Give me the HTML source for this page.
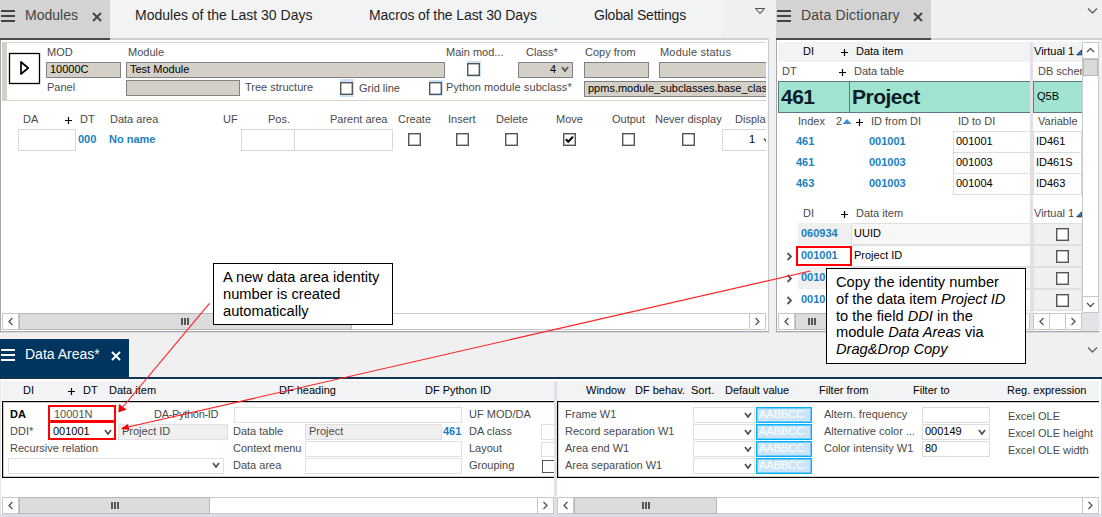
<!DOCTYPE html>
<html><head><meta charset="utf-8"><style>
html,body{margin:0;padding:0;width:1102px;height:517px;overflow:hidden;background:#f0f0f0}
.a{position:absolute}
.t{font-family:"Liberation Sans",sans-serif;white-space:nowrap}
</style></head><body>
<div class="a" style="left:0px;top:0px;width:1102px;height:517px;background:#f0f0f0;"></div>
<div class="a" style="left:0px;top:0px;width:722px;height:38px;background:#f2f3f5;"></div>
<div class="a" style="left:722px;top:0px;width:54px;height:38px;background:#f0f0f0;"></div>
<div class="a" style="left:0px;top:0px;width:110px;height:38px;background:#d3d3d3;"></div>
<div class="a" style="left:1px;top:10px;width:14px;height:2px;background:#444;"></div>
<div class="a" style="left:1px;top:15px;width:14px;height:2px;background:#444;"></div>
<div class="a" style="left:1px;top:20px;width:14px;height:2px;background:#444;"></div>
<div class="a t" style="left:25px;top:7px;font-size:14px;line-height:17px;color:#444;">Modules</div>
<svg class="a" style="left:92px;top:11.5px;" width="10" height="10" viewBox="0 0 10 10"><path d="M1 1L9 9M9 1L1 9" stroke="#444" stroke-width="1.9" fill="none"/></svg>
<div class="a t" style="left:135px;top:7px;font-size:14px;line-height:17px;color:#1e1e1e;">Modules of the Last 30 Days</div>
<div class="a t" style="left:369px;top:7px;font-size:14px;line-height:17px;color:#1e1e1e;letter-spacing:-0.1px;">Macros of the Last 30 Days</div>
<div class="a t" style="left:594px;top:7px;font-size:14px;line-height:17px;color:#1e1e1e;letter-spacing:-0.2px;">Global Settings</div>
<svg class="a" style="left:754px;top:7px;" width="12" height="8" viewBox="0 0 12 8"><path d="M1.5 1.5L10.5 1.5L6 6.5Z" stroke="#555" stroke-width="1.1" fill="none" stroke-linejoin="round"/></svg>
<div class="a" style="left:0px;top:38px;width:110px;height:2px;background:#4a4a4a;"></div>
<div class="a" style="left:110px;top:38px;width:659px;height:2px;background:#d0d0d0;"></div>
<div class="a" style="left:0px;top:40px;width:769px;height:293px;background:#fff;"></div>
<div class="a" style="left:0px;top:40px;width:1px;height:292px;background:#a8a8a8;"></div>
<div class="a" style="left:768px;top:40px;width:1px;height:292px;background:#c8ccd6;"></div>
<div class="a" style="left:0px;top:331px;width:769px;height:1px;background:#ababab;"></div>
<div class="a" style="left:0px;top:332px;width:769px;height:1px;background:#d8d8e2;"></div>
<div class="a" style="left:2px;top:42px;width:764px;height:1px;background:#d8d4cc;"></div>
<div class="a" style="left:2px;top:100px;width:764px;height:1px;background:#d8d4cc;"></div>
<div class="a" style="left:2px;top:42px;width:5px;height:59px;background:#d4d0c8;"></div>
<svg class="a" style="left:8px;top:52px;" width="34" height="34" viewBox="0 0 34 34"><rect x="1.5" y="1.5" width="30" height="30" stroke="#000" stroke-width="1.3" fill="#fff"/><path d="M13 10L13 22L20.2 16Z" stroke="#000" stroke-width="1.7" fill="none" stroke-linejoin="round"/></svg>
<div class="a t" style="left:47px;top:46px;font-size:11px;line-height:13px;color:#4a4a4a;">MOD</div>
<div class="a t" style="left:128px;top:46px;font-size:11px;line-height:13px;color:#4a4a4a;">Module</div>
<div class="a t" style="left:47px;top:81px;font-size:11px;line-height:13px;color:#4a4a4a;">Panel</div>
<div class="a" style="left:46px;top:62px;width:75px;height:16px;background:#d4d0c8;box-sizing:border-box;border:1px solid #828282;"></div>
<div class="a t" style="left:50px;top:63px;font-size:11px;line-height:13px;color:#000;">10000C</div>
<div class="a" style="left:126px;top:62px;width:319px;height:16px;background:#d4d0c8;box-sizing:border-box;border:1px solid #828282;"></div>
<div class="a t" style="left:130px;top:63px;font-size:11px;line-height:13px;color:#000;">Test Module</div>
<div class="a" style="left:126px;top:80px;width:114px;height:16px;background:#d4d0c8;box-sizing:border-box;border:1px solid #828282;"></div>
<div class="a t" style="left:245px;top:81px;font-size:11px;line-height:13px;color:#4a4a4a;">Tree structure</div>
<div class="a" style="left:340px;top:79px;width:14px;height:18px;background:#cce4fa;"></div>
<svg class="a" style="left:340px;top:82px;" width="13" height="13" viewBox="0 0 13 13"><rect x="0.7" y="0.7" width="11.6" height="11.6" stroke="#555" stroke-width="1.4" fill="#fff"/></svg>
<div class="a t" style="left:359px;top:82px;font-size:11px;line-height:13px;color:#4a4a4a;">Grid line</div>
<div class="a" style="left:429px;top:80px;width:14px;height:16px;background:#cce4fa;"></div>
<svg class="a" style="left:429px;top:82px;" width="13" height="13" viewBox="0 0 13 13"><rect x="0.7" y="0.7" width="11.6" height="11.6" stroke="#555" stroke-width="1.4" fill="#fff"/></svg>
<div class="a t" style="left:446px;top:81px;font-size:11px;line-height:13px;color:#4a4a4a;letter-spacing:0.1px;">Python module subclass*</div>
<div class="a t" style="left:446px;top:46px;font-size:11px;line-height:13px;color:#4a4a4a;">Main mod...</div>
<div class="a" style="left:467px;top:61px;width:14px;height:16px;background:#cce4fa;"></div>
<svg class="a" style="left:467px;top:63px;" width="13" height="13" viewBox="0 0 13 13"><rect x="0.7" y="0.7" width="11.6" height="11.6" stroke="#555" stroke-width="1.4" fill="#fff"/></svg>
<div class="a t" style="left:526px;top:46px;font-size:11px;line-height:13px;color:#4a4a4a;">Class*</div>
<div class="a" style="left:518px;top:62px;width:55px;height:16px;background:#d4d0c8;box-sizing:border-box;border:1px solid #828282;"></div>
<div class="a t" style="left:550px;top:63px;font-size:11px;line-height:13px;color:#000;">4</div>
<svg class="a" style="left:561px;top:66px;" width="8" height="6" viewBox="0 0 8 6"><path d="M1 1L4.0 5L7 1" stroke="#555" stroke-width="1.8" fill="none"/></svg>
<div class="a t" style="left:585px;top:46px;font-size:11px;line-height:13px;color:#4a4a4a;">Copy from</div>
<div class="a" style="left:584px;top:62px;width:65px;height:16px;background:#d4d0c8;box-sizing:border-box;border:1px solid #828282;"></div>
<div class="a t" style="left:660px;top:46px;font-size:11px;line-height:13px;color:#4a4a4a;letter-spacing:0.2px;">Module status</div>
<div class="a" style="left:659px;top:62px;width:107px;height:16px;background:#d4d0c8;box-sizing:border-box;border:1px solid #828282;border-right:none;"></div>
<div class="a" style="left:584px;top:81px;width:182px;height:16px;overflow:hidden">
<div class="a" style="left:0px;top:0px;width:200px;height:16px;background:#d4d0c8;box-sizing:border-box;border:1px solid #828282;"></div>
<div class="a t" style="left:4px;top:1px;font-size:11px;line-height:13px;color:#000;">ppms.module_subclasses.base_class</div>
</div>
<div class="a t" style="left:23px;top:113px;font-size:11px;line-height:13px;color:#4a4a4a;">DA</div>
<svg class="a" style="left:65px;top:117px;" width="7" height="7" viewBox="0 0 7 7"><path d="M3.5 0V7M0 3.5H7" stroke="#000" stroke-width="1.2"/></svg>
<div class="a t" style="left:80px;top:113px;font-size:11px;line-height:13px;color:#4a4a4a;">DT</div>
<div class="a t" style="left:110px;top:113px;font-size:11px;line-height:13px;color:#4a4a4a;">Data area</div>
<div class="a t" style="left:223px;top:113px;font-size:11px;line-height:13px;color:#4a4a4a;">UF</div>
<div class="a t" style="left:268px;top:113px;font-size:11px;line-height:13px;color:#4a4a4a;">Pos.</div>
<div class="a t" style="left:330px;top:113px;font-size:11px;line-height:13px;color:#4a4a4a;">Parent area</div>
<div class="a t" style="left:398px;top:113px;font-size:11px;line-height:13px;color:#4a4a4a;">Create</div>
<div class="a t" style="left:448px;top:113px;font-size:11px;line-height:13px;color:#4a4a4a;">Insert</div>
<div class="a t" style="left:496px;top:113px;font-size:11px;line-height:13px;color:#4a4a4a;">Delete</div>
<div class="a t" style="left:556px;top:113px;font-size:11px;line-height:13px;color:#4a4a4a;">Move</div>
<div class="a t" style="left:612px;top:113px;font-size:11px;line-height:13px;color:#4a4a4a;">Output</div>
<div class="a t" style="left:655px;top:113px;font-size:11px;line-height:13px;color:#4a4a4a;">Never display</div>
<div class="a" style="left:0;top:110px;width:766px;height:50px;overflow:hidden">
<div class="a t" style="left:735px;top:3px;font-size:11px;line-height:13px;color:#4a4a4a;">Displa</div>
<div class="a" style="left:722px;top:19px;width:60px;height:22px;background:#fff;box-sizing:border-box;border:1px solid #d8d8d8;"></div>
<div class="a t" style="left:749px;top:23px;font-size:11px;line-height:13px;color:#000;">1</div>
<svg class="a" style="left:763px;top:27px;" width="6" height="6" viewBox="0 0 6 6"><path d="M1 1.5L3 4L5 1.5" stroke="#555" stroke-width="1.5" fill="none"/></svg>
</div>
<div class="a" style="left:18px;top:129px;width:58px;height:22px;background:#fff;box-sizing:border-box;border:1px solid #d8d8d8;"></div>
<div class="a t" style="left:78px;top:133px;font-size:11px;line-height:13px;color:#1b7fc1;font-weight:700;">000</div>
<div class="a t" style="left:109px;top:133px;font-size:11px;line-height:13px;color:#1b7fc1;font-weight:700;">No name</div>
<div class="a" style="left:241px;top:129px;width:54px;height:22px;background:#fff;box-sizing:border-box;border:1px solid #d8d8d8;"></div>
<div class="a" style="left:294px;top:129px;width:99px;height:22px;background:#fff;box-sizing:border-box;border:1px solid #d8d8d8;"></div>
<svg class="a" style="left:408px;top:133px;" width="13" height="13" viewBox="0 0 13 13"><rect x="0.7" y="0.7" width="11.6" height="11.6" stroke="#555" stroke-width="1.4" fill="#fff"/></svg>
<svg class="a" style="left:456px;top:133px;" width="13" height="13" viewBox="0 0 13 13"><rect x="0.7" y="0.7" width="11.6" height="11.6" stroke="#555" stroke-width="1.4" fill="#fff"/></svg>
<svg class="a" style="left:505px;top:133px;" width="13" height="13" viewBox="0 0 13 13"><rect x="0.7" y="0.7" width="11.6" height="11.6" stroke="#555" stroke-width="1.4" fill="#fff"/></svg>
<svg class="a" style="left:563px;top:133px;" width="13" height="13" viewBox="0 0 13 13"><rect x="0.7" y="0.7" width="11.6" height="11.6" stroke="#555" stroke-width="1.4" fill="#fff"/><path d="M2.8 6.2L5.3 8.8L10 3.6" stroke="#000" stroke-width="2.1" fill="none"/></svg>
<svg class="a" style="left:622px;top:133px;" width="13" height="13" viewBox="0 0 13 13"><rect x="0.7" y="0.7" width="11.6" height="11.6" stroke="#555" stroke-width="1.4" fill="#fff"/></svg>
<svg class="a" style="left:682px;top:133px;" width="13" height="13" viewBox="0 0 13 13"><rect x="0.7" y="0.7" width="11.6" height="11.6" stroke="#555" stroke-width="1.4" fill="#fff"/></svg>
<div class="a" style="left:2px;top:313px;width:764px;height:17px;background:#fff;box-sizing:border-box;border:1px solid #c8c8c8;"></div>
<div class="a" style="left:2px;top:313px;width:17px;height:17px;background:#fff;box-sizing:border-box;border:1px solid #c8c8c8;"></div>
<svg class="a" style="left:2px;top:313px;" width="17" height="17" viewBox="0 0 17 17"><path d="M10.5 5L7 8.5L10.5 12" stroke="#555" stroke-width="1.3" fill="none"/></svg>
<div class="a" style="left:19px;top:313px;width:333px;height:17px;background:#dcdcdc;box-sizing:border-box;border:1px solid #b8b8b8;"></div>
<div class="a" style="left:181px;top:318px;width:2px;height:7px;background:#555;"></div>
<div class="a" style="left:184px;top:318px;width:2px;height:7px;background:#555;"></div>
<div class="a" style="left:187px;top:318px;width:2px;height:7px;background:#555;"></div>
<div class="a" style="left:749px;top:313px;width:17px;height:17px;background:#fff;box-sizing:border-box;border:1px solid #c8c8c8;"></div>
<svg class="a" style="left:749px;top:313px;" width="17" height="17" viewBox="0 0 17 17"><path d="M6.5 5L10 8.5L6.5 12" stroke="#555" stroke-width="1.3" fill="none"/></svg>
<div class="a" style="left:776px;top:0px;width:326px;height:38px;background:#f0f0f0;"></div>
<div class="a" style="left:776px;top:0px;width:155px;height:38px;background:#d3d3d3;"></div>
<div class="a" style="left:777px;top:10px;width:14px;height:2px;background:#444;"></div>
<div class="a" style="left:777px;top:15px;width:14px;height:2px;background:#444;"></div>
<div class="a" style="left:777px;top:20px;width:14px;height:2px;background:#444;"></div>
<div class="a t" style="left:801px;top:7px;font-size:14px;line-height:17px;color:#444;letter-spacing:0.2px;">Data Dictionary</div>
<svg class="a" style="left:913px;top:11.5px;" width="10" height="10" viewBox="0 0 10 10"><path d="M1 1L9 9M9 1L1 9" stroke="#444" stroke-width="1.9" fill="none"/></svg>
<svg class="a" style="left:1087px;top:7px;" width="12" height="8" viewBox="0 0 12 8"><path d="M1 1.5L5.5 6L10 1.5" stroke="#666" stroke-width="1.5" fill="none"/></svg>
<div class="a" style="left:776px;top:38px;width:155px;height:2px;background:#4a4a4a;"></div>
<div class="a" style="left:931px;top:38px;width:171px;height:2px;background:#d0d0d0;"></div>
<div class="a" style="left:776px;top:40px;width:323px;height:293px;background:#fff;"></div>
<div class="a" style="left:776px;top:40px;width:1px;height:292px;background:#a8a8a8;"></div>
<div class="a" style="left:776px;top:331px;width:323px;height:1px;background:#ababab;"></div>
<div class="a" style="left:776px;top:332px;width:323px;height:1px;background:#d8d8e2;"></div>
<div class="a" style="left:778px;top:42px;width:304px;height:20px;background:#f2f3f5;"></div>
<div class="a t" style="left:803px;top:45px;font-size:11px;line-height:13px;color:#000;">DI</div>
<svg class="a" style="left:841px;top:49px;" width="7" height="7" viewBox="0 0 7 7"><path d="M3.5 0V7M0 3.5H7" stroke="#000" stroke-width="1.2"/></svg>
<div class="a t" style="left:856px;top:45px;font-size:11px;line-height:13px;color:#000;">Data item</div>
<div class="a t" style="left:1034px;top:45px;font-size:11px;line-height:13px;color:#000;">Virtual 1</div>
<svg class="a" style="left:1076px;top:49px;" width="7" height="7" viewBox="0 0 7 7"><path d="M0.8 5.8L5.8 0.8L5.8 5.8Z" fill="#2a8ae0" stroke="#223" stroke-width="0.9" stroke-linejoin="round"/></svg>
<div class="a t" style="left:782px;top:65px;font-size:11px;line-height:13px;color:#4a4a4a;">DT</div>
<svg class="a" style="left:839px;top:69px;" width="7" height="7" viewBox="0 0 7 7"><path d="M3.5 0V7M0 3.5H7" stroke="#000" stroke-width="1.2"/></svg>
<div class="a t" style="left:854px;top:65px;font-size:11px;line-height:13px;color:#4a4a4a;">Data table</div>
<div class="a" style="left:1033px;top:60px;width:49px;height:20px;overflow:hidden">
<div class="a t" style="left:5px;top:5px;font-size:11px;line-height:13px;color:#4a4a4a;">DB schema</div>
</div>
<div class="a" style="left:778px;top:81px;width:253px;height:32px;background:#9fe3d0;box-sizing:border-box;border:1px solid #5f7888;"></div>
<div class="a" style="left:849px;top:81px;width:1px;height:32px;background:#5f7888;"></div>
<div class="a t" style="left:781px;top:84px;font-size:21px;line-height:25px;color:#0d1b2a;font-weight:700;letter-spacing:-0.5px;">461</div>
<div class="a t" style="left:852px;top:84px;font-size:21px;line-height:25px;color:#0d1b2a;font-weight:700;letter-spacing:-0.5px;">Project</div>
<div class="a" style="left:1033px;top:81px;width:50px;height:32px;background:#9fe3d0;box-sizing:border-box;border:1px solid #5f7888;"></div>
<div class="a t" style="left:1037px;top:90px;font-size:11px;line-height:13px;color:#000;">Q5B</div>
<div class="a" style="left:1030px;top:42px;width:3px;height:289px;background:#e4dfe8;"></div>
<div class="a t" style="left:798px;top:115px;font-size:11px;line-height:13px;color:#4a4a4a;">Index</div>
<div class="a t" style="left:836px;top:115px;font-size:11px;line-height:13px;color:#4a4a4a;">2</div>
<svg class="a" style="left:842px;top:118px;" width="10" height="7" viewBox="0 0 10 7"><path d="M0.5 6L5 1L9.5 6Z" fill="#3a8fd8"/></svg>
<svg class="a" style="left:856px;top:119px;" width="7" height="7" viewBox="0 0 7 7"><path d="M3.5 0V7M0 3.5H7" stroke="#000" stroke-width="1.2"/></svg>
<div class="a t" style="left:871px;top:115px;font-size:11px;line-height:13px;color:#4a4a4a;">ID from DI</div>
<div class="a t" style="left:958px;top:115px;font-size:11px;line-height:13px;color:#4a4a4a;">ID to DI</div>
<div class="a t" style="left:1038px;top:115px;font-size:11px;line-height:13px;color:#4a4a4a;">Variable</div>
<div class="a" style="left:953px;top:131px;width:78px;height:22px;background:#fff;box-sizing:border-box;border:1px solid #dcdcdc;"></div>
<div class="a" style="left:1033px;top:131px;width:49px;height:22px;background:#fff;box-sizing:border-box;border:1px solid #dcdcdc;"></div>
<div class="a t" style="left:796px;top:135px;font-size:11px;line-height:13px;color:#1b7fc1;font-weight:700;">461</div>
<div class="a t" style="left:869px;top:135px;font-size:11px;line-height:13px;color:#1b7fc1;font-weight:700;">001001</div>
<div class="a t" style="left:956px;top:135px;font-size:11px;line-height:13px;color:#000;">001001</div>
<div class="a t" style="left:1036px;top:135px;font-size:11px;line-height:13px;color:#000;">ID461</div>
<div class="a" style="left:953px;top:152px;width:78px;height:22px;background:#fff;box-sizing:border-box;border:1px solid #dcdcdc;"></div>
<div class="a" style="left:1033px;top:152px;width:49px;height:22px;background:#fff;box-sizing:border-box;border:1px solid #dcdcdc;"></div>
<div class="a t" style="left:796px;top:156px;font-size:11px;line-height:13px;color:#1b7fc1;font-weight:700;">461</div>
<div class="a t" style="left:869px;top:156px;font-size:11px;line-height:13px;color:#1b7fc1;font-weight:700;">001003</div>
<div class="a t" style="left:956px;top:156px;font-size:11px;line-height:13px;color:#000;">001003</div>
<div class="a t" style="left:1036px;top:156px;font-size:11px;line-height:13px;color:#000;">ID461S</div>
<div class="a" style="left:953px;top:173px;width:78px;height:22px;background:#fff;box-sizing:border-box;border:1px solid #dcdcdc;"></div>
<div class="a" style="left:1033px;top:173px;width:49px;height:22px;background:#fff;box-sizing:border-box;border:1px solid #dcdcdc;"></div>
<div class="a t" style="left:796px;top:177px;font-size:11px;line-height:13px;color:#1b7fc1;font-weight:700;">463</div>
<div class="a t" style="left:869px;top:177px;font-size:11px;line-height:13px;color:#1b7fc1;font-weight:700;">001003</div>
<div class="a t" style="left:956px;top:177px;font-size:11px;line-height:13px;color:#000;">001004</div>
<div class="a t" style="left:1036px;top:177px;font-size:11px;line-height:13px;color:#000;">ID463</div>
<div class="a t" style="left:803px;top:207px;font-size:11px;line-height:13px;color:#4a4a4a;">DI</div>
<svg class="a" style="left:841px;top:211px;" width="7" height="7" viewBox="0 0 7 7"><path d="M3.5 0V7M0 3.5H7" stroke="#000" stroke-width="1.2"/></svg>
<div class="a t" style="left:856px;top:207px;font-size:11px;line-height:13px;color:#4a4a4a;">Data item</div>
<div class="a t" style="left:1034px;top:207px;font-size:11px;line-height:13px;color:#4a4a4a;">Virtual 1</div>
<svg class="a" style="left:1076px;top:211px;" width="7" height="7" viewBox="0 0 7 7"><path d="M0.8 5.8L5.8 0.8L5.8 5.8Z" fill="#2a8ae0" stroke="#223" stroke-width="0.9" stroke-linejoin="round"/></svg>
<div class="a" style="left:798px;top:223px;width:54px;height:22px;background:#f0f0f0;"></div>
<div class="a" style="left:851px;top:223px;width:180px;height:22px;background:#f7f7f7;box-sizing:border-box;border:1px solid #e0e0e0;"></div>
<div class="a" style="left:1033px;top:223px;width:49px;height:22px;background:#f0f0f0;box-sizing:border-box;border:1px solid #e0e0e0;"></div>
<div class="a t" style="left:801px;top:227px;font-size:11px;line-height:13px;color:#1b7fc1;font-weight:700;">060934</div>
<div class="a t" style="left:854px;top:227px;font-size:11px;line-height:13px;color:#000;">UUID</div>
<svg class="a" style="left:1056px;top:228px;" width="13" height="13" viewBox="0 0 13 13"><rect x="0.7" y="0.7" width="11.6" height="11.6" stroke="#555" stroke-width="1.4" fill="#fff"/></svg>
<div class="a" style="left:798px;top:245px;width:54px;height:22px;background:#fff;"></div>
<div class="a" style="left:851px;top:245px;width:180px;height:22px;background:#fff;box-sizing:border-box;border:1px solid #e0e0e0;"></div>
<div class="a" style="left:1033px;top:245px;width:49px;height:22px;background:#f0f0f0;box-sizing:border-box;border:1px solid #e0e0e0;"></div>
<svg class="a" style="left:786px;top:252px;" width="7" height="9" viewBox="0 0 7 9"><path d="M1.5 1L5 4.5L1.5 8" stroke="#555" stroke-width="1.8" fill="none"/></svg>
<div class="a t" style="left:801px;top:249px;font-size:11px;line-height:13px;color:#1b7fc1;font-weight:700;">001001</div>
<div class="a t" style="left:854px;top:249px;font-size:11px;line-height:13px;color:#000;">Project ID</div>
<svg class="a" style="left:1056px;top:250px;" width="13" height="13" viewBox="0 0 13 13"><rect x="0.7" y="0.7" width="11.6" height="11.6" stroke="#555" stroke-width="1.4" fill="#fff"/></svg>
<div class="a" style="left:798px;top:267px;width:54px;height:22px;background:#f0f0f0;"></div>
<div class="a" style="left:851px;top:267px;width:180px;height:22px;background:#f7f7f7;box-sizing:border-box;border:1px solid #e0e0e0;"></div>
<div class="a" style="left:1033px;top:267px;width:49px;height:22px;background:#f0f0f0;box-sizing:border-box;border:1px solid #e0e0e0;"></div>
<svg class="a" style="left:786px;top:274px;" width="7" height="9" viewBox="0 0 7 9"><path d="M1.5 1L5 4.5L1.5 8" stroke="#555" stroke-width="1.8" fill="none"/></svg>
<div class="a t" style="left:801px;top:271px;font-size:11px;line-height:13px;color:#1b7fc1;font-weight:700;">001010</div>
<div class="a t" style="left:854px;top:271px;font-size:11px;line-height:13px;color:#000;">Project name</div>
<svg class="a" style="left:1056px;top:272px;" width="13" height="13" viewBox="0 0 13 13"><rect x="0.7" y="0.7" width="11.6" height="11.6" stroke="#555" stroke-width="1.4" fill="#fff"/></svg>
<div class="a" style="left:798px;top:289px;width:54px;height:22px;background:#fff;"></div>
<div class="a" style="left:851px;top:289px;width:180px;height:22px;background:#fff;box-sizing:border-box;border:1px solid #e0e0e0;"></div>
<div class="a" style="left:1033px;top:289px;width:49px;height:22px;background:#f0f0f0;box-sizing:border-box;border:1px solid #e0e0e0;"></div>
<svg class="a" style="left:786px;top:296px;" width="7" height="9" viewBox="0 0 7 9"><path d="M1.5 1L5 4.5L1.5 8" stroke="#555" stroke-width="1.8" fill="none"/></svg>
<div class="a t" style="left:801px;top:293px;font-size:11px;line-height:13px;color:#1b7fc1;font-weight:700;">001011</div>
<div class="a t" style="left:854px;top:293px;font-size:11px;line-height:13px;color:#000;">Project x</div>
<svg class="a" style="left:1056px;top:294px;" width="13" height="13" viewBox="0 0 13 13"><rect x="0.7" y="0.7" width="11.6" height="11.6" stroke="#555" stroke-width="1.4" fill="#fff"/></svg>
<div class="a" style="left:796px;top:246px;width:56px;height:20px;box-sizing:border-box;border:2px solid #f00;"></div>
<div class="a" style="left:1082px;top:42px;width:17px;height:271px;background:#fff;box-sizing:border-box;border:1px solid #c8c8c8;"></div>
<div class="a" style="left:1082px;top:42px;width:17px;height:17px;background:#fff;box-sizing:border-box;border:1px solid #c8c8c8;"></div>
<svg class="a" style="left:1082px;top:42px;" width="17" height="17" viewBox="0 0 17 17"><path d="M5 10L8.5 6.5L12 10" stroke="#555" stroke-width="1.3" fill="none"/></svg>
<div class="a" style="left:1083px;top:59px;width:15px;height:17px;background:#dadada;box-sizing:border-box;border:1px solid #b8b8b8;"></div>
<div class="a" style="left:1082px;top:296px;width:17px;height:17px;background:#fff;box-sizing:border-box;border:1px solid #c8c8c8;"></div>
<svg class="a" style="left:1082px;top:296px;" width="17" height="17" viewBox="0 0 17 17"><path d="M5 7L8.5 10.5L12 7" stroke="#555" stroke-width="1.3" fill="none"/></svg>
<div class="a" style="left:1082px;top:313px;width:17px;height:18px;background:#e6e2ea;"></div>
<div class="a" style="left:778px;top:313px;width:252px;height:17px;background:#fff;box-sizing:border-box;border:1px solid #c8c8c8;"></div>
<div class="a" style="left:778px;top:313px;width:17px;height:17px;background:#fff;box-sizing:border-box;border:1px solid #c8c8c8;"></div>
<svg class="a" style="left:778px;top:313px;" width="17" height="17" viewBox="0 0 17 17"><path d="M10.5 5L7 8.5L10.5 12" stroke="#555" stroke-width="1.3" fill="none"/></svg>
<div class="a" style="left:795px;top:313px;width:80px;height:17px;background:#dcdcdc;box-sizing:border-box;border:1px solid #b8b8b8;"></div>
<div class="a" style="left:808px;top:318px;width:2px;height:7px;background:#555;"></div>
<div class="a" style="left:811px;top:318px;width:2px;height:7px;background:#555;"></div>
<div class="a" style="left:814px;top:318px;width:2px;height:7px;background:#555;"></div>
<div class="a" style="left:1033px;top:313px;width:49px;height:17px;background:#fff;box-sizing:border-box;border:1px solid #c8c8c8;"></div>
<div class="a" style="left:1033px;top:313px;width:17px;height:17px;background:#fff;box-sizing:border-box;border:1px solid #c8c8c8;"></div>
<svg class="a" style="left:1033px;top:313px;" width="17" height="17" viewBox="0 0 17 17"><path d="M10.5 5L7 8.5L10.5 12" stroke="#555" stroke-width="1.3" fill="none"/></svg>
<div class="a" style="left:1049px;top:313px;width:17px;height:17px;background:#fff;box-sizing:border-box;border:1px solid #c8c8c8;"></div>
<div class="a" style="left:1065px;top:313px;width:17px;height:17px;background:#fff;box-sizing:border-box;border:1px solid #c8c8c8;"></div>
<svg class="a" style="left:1065px;top:313px;" width="17" height="17" viewBox="0 0 17 17"><path d="M6.5 5L10 8.5L6.5 12" stroke="#555" stroke-width="1.3" fill="none"/></svg>
<svg class="a" style="left:1087px;top:346px;" width="12" height="8" viewBox="0 0 12 8"><path d="M1 1.5L5.5 6L10 1.5" stroke="#666" stroke-width="1.5" fill="none"/></svg>
<div class="a" style="left:0px;top:339px;width:129px;height:39px;background:#003560;"></div>
<div class="a" style="left:1px;top:349px;width:14px;height:2px;background:#fff;"></div>
<div class="a" style="left:1px;top:354px;width:14px;height:2px;background:#fff;"></div>
<div class="a" style="left:1px;top:359px;width:14px;height:2px;background:#fff;"></div>
<div class="a t" style="left:25px;top:346px;font-size:14px;line-height:17px;color:#fff;">Data Areas*</div>
<svg class="a" style="left:111px;top:351px;" width="10" height="10" viewBox="0 0 10 10"><path d="M1 1L9 9M9 1L1 9" stroke="#fff" stroke-width="2" fill="none"/></svg>
<div class="a" style="left:0px;top:377px;width:1102px;height:2px;background:#0f3456;"></div>
<div class="a" style="left:0px;top:379px;width:1099px;height:135px;background:#fff;"></div>
<div class="a" style="left:2px;top:381px;width:1097px;height:19px;background:#f2f3f5;"></div>
<div class="a" style="left:0px;top:380px;width:1px;height:134px;background:#e6e6e6;"></div>
<div class="a" style="left:0px;top:514px;width:1102px;height:3px;background:#dcdce4;"></div>
<div class="a" style="left:1099px;top:379px;width:3px;height:135px;background:#fff;"></div>
<div class="a" style="left:1101px;top:379px;width:1px;height:135px;background:#d8d8d8;"></div>
<div class="a t" style="left:23px;top:384px;font-size:11px;line-height:13px;color:#000;">DI</div>
<svg class="a" style="left:68px;top:388px;" width="7" height="7" viewBox="0 0 7 7"><path d="M3.5 0V7M0 3.5H7" stroke="#000" stroke-width="1.2"/></svg>
<div class="a t" style="left:83px;top:384px;font-size:11px;line-height:13px;color:#000;">DT</div>
<div class="a t" style="left:109px;top:384px;font-size:11px;line-height:13px;color:#000;">Data item</div>
<div class="a t" style="left:279px;top:384px;font-size:11px;line-height:13px;color:#000;">DF heading</div>
<div class="a t" style="left:425px;top:384px;font-size:11px;line-height:13px;color:#000;">DF Python ID</div>
<div class="a t" style="left:586px;top:384px;font-size:11px;line-height:13px;color:#000;">Window</div>
<div class="a t" style="left:635px;top:384px;font-size:11px;line-height:13px;color:#000;">DF behav.</div>
<div class="a t" style="left:691px;top:384px;font-size:11px;line-height:13px;color:#000;">Sort.</div>
<div class="a t" style="left:725px;top:384px;font-size:11px;line-height:13px;color:#000;">Default value</div>
<div class="a t" style="left:819px;top:384px;font-size:11px;line-height:13px;color:#000;">Filter from</div>
<div class="a t" style="left:913px;top:384px;font-size:11px;line-height:13px;color:#000;">Filter to</div>
<div class="a t" style="left:1007px;top:384px;font-size:11px;line-height:13px;color:#000;">Reg. expression</div>
<div class="a" style="left:554px;top:381px;width:3px;height:133px;background:#e6dfe8;"></div>
<div class="a" style="left:2px;top:401px;width:552px;height:77px;box-sizing:border-box;border:1px solid #000;border-right:none;box-shadow:inset 1px 1px 0 rgba(0,0,0,.2),inset 0 -1px 0 rgba(0,0,0,.2);"></div>
<div class="a t" style="left:10px;top:408px;font-size:11px;line-height:13px;color:#000;font-weight:700;">DA</div>
<div class="a t" style="left:10px;top:425px;font-size:11px;line-height:13px;color:#4a4a4a;">DDI*</div>
<div class="a t" style="left:10px;top:442px;font-size:11px;line-height:13px;color:#4a4a4a;">Recursive relation</div>
<div class="a" style="left:48px;top:405px;width:68px;height:17px;background:#fff;box-sizing:border-box;border:2px solid #f00;"></div>
<div class="a t" style="left:54px;top:408px;font-size:11px;line-height:13px;color:#505050;">10001N</div>
<div class="a" style="left:48px;top:421px;width:68px;height:19px;background:#fff;box-sizing:border-box;border:2px solid #f00;"></div>
<div class="a t" style="left:53px;top:425px;font-size:11px;line-height:13px;color:#000;">001001</div>
<svg class="a" style="left:104px;top:429px;" width="8" height="6" viewBox="0 0 8 6"><path d="M1 1L4.0 5L7 1" stroke="#555" stroke-width="1.8" fill="none"/></svg>
<div class="a" style="left:118px;top:424px;width:110px;height:16px;background:#f0f0f0;box-sizing:border-box;border:1px solid #e0e0e0;"></div>
<div class="a t" style="left:122px;top:425px;font-size:11px;line-height:13px;color:#4a4a4a;">Project ID</div>
<div class="a" style="left:8px;top:458px;width:216px;height:16px;background:#fff;box-sizing:border-box;border:1px solid #e0e0e0;"></div>
<svg class="a" style="left:212px;top:462px;" width="8" height="6" viewBox="0 0 8 6"><path d="M1 1L4.0 5L7 1" stroke="#555" stroke-width="1.8" fill="none"/></svg>
<div class="a t" style="left:154px;top:408px;font-size:11px;line-height:13px;color:#4a4a4a;letter-spacing:-0.3px;">DA-Python-ID</div>
<div class="a" style="left:234px;top:407px;width:228px;height:16px;background:#fff;box-sizing:border-box;border:1px solid #e0e0e0;"></div>
<div class="a t" style="left:233px;top:425px;font-size:11px;line-height:13px;color:#4a4a4a;">Data table</div>
<div class="a t" style="left:233px;top:442px;font-size:11px;line-height:13px;color:#4a4a4a;">Context menu</div>
<div class="a t" style="left:233px;top:459px;font-size:11px;line-height:13px;color:#4a4a4a;">Data area</div>
<div class="a" style="left:305px;top:424px;width:137px;height:16px;background:#f0f0f0;box-sizing:border-box;border:1px solid #e0e0e0;"></div>
<div class="a t" style="left:309px;top:425px;font-size:11px;line-height:13px;color:#4a4a4a;">Project</div>
<div class="a t" style="left:443px;top:425px;font-size:11px;line-height:13px;color:#1b7fc1;font-weight:700;">461</div>
<div class="a" style="left:305px;top:441px;width:157px;height:16px;background:#fff;box-sizing:border-box;border:1px solid #e0e0e0;"></div>
<div class="a" style="left:305px;top:458px;width:157px;height:16px;background:#fff;box-sizing:border-box;border:1px solid #e0e0e0;"></div>
<div class="a t" style="left:469px;top:408px;font-size:11px;line-height:13px;color:#4a4a4a;">UF MOD/DA</div>
<div class="a t" style="left:469px;top:425px;font-size:11px;line-height:13px;color:#4a4a4a;">DA class</div>
<div class="a t" style="left:469px;top:442px;font-size:11px;line-height:13px;color:#4a4a4a;">Layout</div>
<div class="a t" style="left:469px;top:459px;font-size:11px;line-height:13px;color:#4a4a4a;">Grouping</div>
<div class="a" style="left:530px;top:400px;width:24px;height:78px;overflow:hidden">
<div class="a" style="left:11px;top:24px;width:30px;height:16px;background:#fff;box-sizing:border-box;border:1px solid #e0e0e0;"></div>
<div class="a" style="left:11px;top:42px;width:30px;height:15px;background:#fff;box-sizing:border-box;border:1px solid #e0e0e0;"></div>
<div class="a" style="left:12px;top:60px;width:14px;height:13px;background:#fff;box-sizing:border-box;border:1px solid #555;"></div>
</div>
<div class="a" style="left:557px;top:401px;width:542px;height:77px;box-sizing:border-box;border:1px solid #000;border-right:none;box-shadow:inset 1px 1px 0 rgba(0,0,0,.2),inset 0 -1px 0 rgba(0,0,0,.2);"></div>
<div class="a t" style="left:565px;top:408px;font-size:11px;line-height:13px;color:#4a4a4a;">Frame W1</div>
<div class="a t" style="left:565px;top:425px;font-size:11px;line-height:13px;color:#4a4a4a;">Record separation W1</div>
<div class="a t" style="left:565px;top:442px;font-size:11px;line-height:13px;color:#4a4a4a;">Area end W1</div>
<div class="a t" style="left:565px;top:459px;font-size:11px;line-height:13px;color:#4a4a4a;">Area separation W1</div>
<div class="a" style="left:693px;top:407px;width:62px;height:16px;background:#fff;box-sizing:border-box;border:1px solid #e0e0e0;"></div>
<svg class="a" style="left:744px;top:412px;" width="8" height="6" viewBox="0 0 8 6"><path d="M1 1L4.0 5L7 1" stroke="#555" stroke-width="1.8" fill="none"/></svg>
<div class="a" style="left:756px;top:407px;width:56px;height:16px;background:#cce4f7;box-sizing:border-box;border:1px solid #00b2fc;box-shadow:inset 0 0 0 1px rgba(0,178,252,.45);"></div>
<div class="a t" style="left:759px;top:408px;font-size:11px;line-height:13px;color:#fff;">AABBCC</div>
<div class="a" style="left:693px;top:424px;width:62px;height:16px;background:#fff;box-sizing:border-box;border:1px solid #e0e0e0;"></div>
<svg class="a" style="left:744px;top:429px;" width="8" height="6" viewBox="0 0 8 6"><path d="M1 1L4.0 5L7 1" stroke="#555" stroke-width="1.8" fill="none"/></svg>
<div class="a" style="left:756px;top:424px;width:56px;height:16px;background:#cce4f7;box-sizing:border-box;border:1px solid #00b2fc;box-shadow:inset 0 0 0 1px rgba(0,178,252,.45);"></div>
<div class="a t" style="left:759px;top:425px;font-size:11px;line-height:13px;color:#fff;">AABBCC</div>
<div class="a" style="left:693px;top:441px;width:62px;height:16px;background:#fff;box-sizing:border-box;border:1px solid #e0e0e0;"></div>
<svg class="a" style="left:744px;top:446px;" width="8" height="6" viewBox="0 0 8 6"><path d="M1 1L4.0 5L7 1" stroke="#555" stroke-width="1.8" fill="none"/></svg>
<div class="a" style="left:756px;top:441px;width:56px;height:16px;background:#cce4f7;box-sizing:border-box;border:1px solid #00b2fc;box-shadow:inset 0 0 0 1px rgba(0,178,252,.45);"></div>
<div class="a t" style="left:759px;top:442px;font-size:11px;line-height:13px;color:#fff;">AABBCC</div>
<div class="a" style="left:693px;top:458px;width:62px;height:16px;background:#fff;box-sizing:border-box;border:1px solid #e0e0e0;"></div>
<svg class="a" style="left:744px;top:463px;" width="8" height="6" viewBox="0 0 8 6"><path d="M1 1L4.0 5L7 1" stroke="#555" stroke-width="1.8" fill="none"/></svg>
<div class="a" style="left:756px;top:458px;width:56px;height:16px;background:#cce4f7;box-sizing:border-box;border:1px solid #00b2fc;box-shadow:inset 0 0 0 1px rgba(0,178,252,.45);"></div>
<div class="a t" style="left:759px;top:459px;font-size:11px;line-height:13px;color:#fff;">AABBCC</div>
<div class="a t" style="left:824px;top:408px;font-size:11px;line-height:13px;color:#4a4a4a;">Altern. frequency</div>
<div class="a t" style="left:824px;top:425px;font-size:11px;line-height:13px;color:#4a4a4a;">Alternative color ...</div>
<div class="a t" style="left:824px;top:442px;font-size:11px;line-height:13px;color:#4a4a4a;">Color intensity W1</div>
<div class="a" style="left:922px;top:407px;width:68px;height:16px;background:#fff;box-sizing:border-box;border:1px solid #dcdcdc;"></div>
<div class="a" style="left:922px;top:424px;width:68px;height:16px;background:#fff;box-sizing:border-box;border:1px solid #dcdcdc;"></div>
<div class="a t" style="left:925px;top:425px;font-size:11px;line-height:13px;color:#000;">000149</div>
<svg class="a" style="left:978px;top:429px;" width="8" height="6" viewBox="0 0 8 6"><path d="M1 1L4.0 5L7 1" stroke="#555" stroke-width="1.8" fill="none"/></svg>
<div class="a" style="left:922px;top:441px;width:68px;height:16px;background:#fff;box-sizing:border-box;border:1px solid #dcdcdc;"></div>
<div class="a t" style="left:925px;top:442px;font-size:11px;line-height:13px;color:#000;">80</div>
<div class="a t" style="left:1008px;top:410px;font-size:11px;line-height:13px;color:#4a4a4a;">Excel OLE</div>
<div class="a t" style="left:1008px;top:427px;font-size:11px;line-height:13px;color:#4a4a4a;">Excel OLE height</div>
<div class="a t" style="left:1008px;top:444px;font-size:11px;line-height:13px;color:#4a4a4a;">Excel OLE width</div>
<div class="a" style="left:2px;top:497px;width:552px;height:17px;background:#fff;box-sizing:border-box;border:1px solid #c8c8c8;"></div>
<div class="a" style="left:2px;top:497px;width:17px;height:17px;background:#fff;box-sizing:border-box;border:1px solid #c8c8c8;"></div>
<svg class="a" style="left:2px;top:497px;" width="17" height="17" viewBox="0 0 17 17"><path d="M10.5 5L7 8.5L10.5 12" stroke="#555" stroke-width="1.3" fill="none"/></svg>
<div class="a" style="left:19px;top:497px;width:191px;height:17px;background:#dcdcdc;box-sizing:border-box;border:1px solid #b8b8b8;"></div>
<div class="a" style="left:111px;top:502px;width:2px;height:7px;background:#555;"></div>
<div class="a" style="left:114px;top:502px;width:2px;height:7px;background:#555;"></div>
<div class="a" style="left:117px;top:502px;width:2px;height:7px;background:#555;"></div>
<div class="a" style="left:537px;top:497px;width:17px;height:17px;background:#fff;box-sizing:border-box;border:1px solid #c8c8c8;"></div>
<svg class="a" style="left:537px;top:497px;" width="17" height="17" viewBox="0 0 17 17"><path d="M6.5 5L10 8.5L6.5 12" stroke="#555" stroke-width="1.3" fill="none"/></svg>
<div class="a" style="left:557px;top:497px;width:542px;height:17px;background:#fff;box-sizing:border-box;border:1px solid #c8c8c8;"></div>
<div class="a" style="left:557px;top:497px;width:17px;height:17px;background:#fff;box-sizing:border-box;border:1px solid #c8c8c8;"></div>
<svg class="a" style="left:557px;top:497px;" width="17" height="17" viewBox="0 0 17 17"><path d="M10.5 5L7 8.5L10.5 12" stroke="#555" stroke-width="1.3" fill="none"/></svg>
<div class="a" style="left:574px;top:497px;width:143px;height:17px;background:#dcdcdc;box-sizing:border-box;border:1px solid #b8b8b8;"></div>
<div class="a" style="left:642px;top:502px;width:2px;height:7px;background:#555;"></div>
<div class="a" style="left:645px;top:502px;width:2px;height:7px;background:#555;"></div>
<div class="a" style="left:648px;top:502px;width:2px;height:7px;background:#555;"></div>
<div class="a" style="left:1082px;top:497px;width:17px;height:17px;background:#fff;box-sizing:border-box;border:1px solid #c8c8c8;"></div>
<svg class="a" style="left:1082px;top:497px;" width="17" height="17" viewBox="0 0 17 17"><path d="M6.5 5L10 8.5L6.5 12" stroke="#555" stroke-width="1.3" fill="none"/></svg>
<div class="a" style="left:213px;top:263px;width:180px;height:62px;box-sizing:border-box;border:1px solid #000;background:#fff"></div>
<div class="a t" style="left:223px;top:269.0px;font-size:14.67px;line-height:17px;color:#000;">A new data area identity</div>
<div class="a t" style="left:223px;top:285.75px;font-size:14.67px;line-height:17px;color:#000;">number is created</div>
<div class="a t" style="left:223px;top:302.5px;font-size:14.67px;line-height:17px;color:#000;">automatically</div>
<div class="a" style="left:826px;top:268px;width:200px;height:96px;box-sizing:border-box;border:1px solid #000;background:#fff"></div>
<div class="a t" style="left:836px;top:274.0px;font-size:14.67px;line-height:17px;color:#000;">Copy the identity number</div>
<div class="a t" style="left:836px;top:290.75px;font-size:14.67px;line-height:17px;color:#000;">of the data item <i>Project ID</i></div>
<div class="a t" style="left:836px;top:307.5px;font-size:14.67px;line-height:17px;color:#000;">to the field <i>DDI</i> in the</div>
<div class="a t" style="left:836px;top:324.25px;font-size:14.67px;line-height:17px;color:#000;">module <i>Data Areas</i> via</div>
<div class="a t" style="left:836px;top:341.0px;font-size:14.67px;line-height:17px;color:#000;"><i>Drag&amp;Drop Copy</i></div>
<svg class="a" style="left:0px;top:0px;pointer-events:none;" width="1102" height="517" viewBox="0 0 1102 517"><g stroke="#f22" stroke-width="1.15" fill="none"><line x1="209.5" y1="303.3" x2="122" y2="408"/><line x1="810.5" y1="271" x2="127" y2="427.3"/></g><path d="M118.4 412.4L118.9 404L126.6 409.5Z" fill="#f00"/><path d="M120.8 428.8L127.9 424.0L129.4 430.0Z" fill="#f00"/></svg>
</body></html>
